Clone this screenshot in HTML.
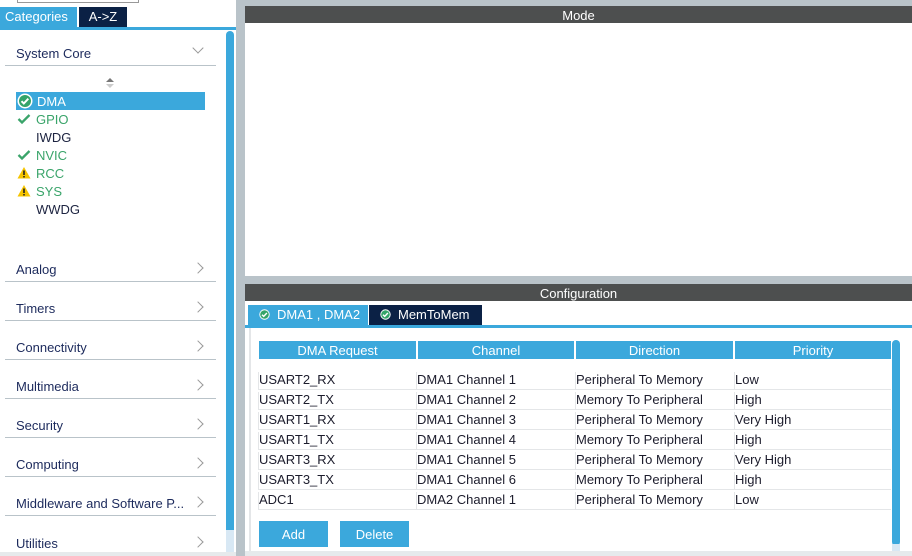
<!DOCTYPE html><html><head><style>
*{margin:0;padding:0;box-sizing:border-box}
body{width:912px;height:556px;background:#b9c3c9;font-family:"Liberation Sans",sans-serif;font-size:13px;position:relative;overflow:hidden;color:#1c2340}
.a{position:absolute}
.cat{position:absolute;left:16px;width:199px;height:23px;border-bottom:1px solid #b9c3c9;font-size:13px;color:#1c2a5c}
.cat span{position:absolute;left:0;bottom:4px}
.cat i{position:absolute;right:14px;bottom:9px;width:8px;height:8px;border-right:1.2px solid #999;border-top:1.2px solid #999;transform:rotate(45deg)}
.it{position:absolute;left:36px;font-size:13px}
.th{position:absolute;top:341px;height:18px;background:#3ba8dc;color:#fff;text-align:center;line-height:20px;font-size:13px}
.row{position:absolute;left:258px;width:633px;height:20px;border-bottom:1px solid #e4e6e8}
.row div{position:absolute;top:2px;font-size:13px;color:#1c1c2c;height:18px;border-left:1px solid #e4e6e8;padding-left:0}
.btn{position:absolute;top:521px;height:26px;background:#3ba8dc;color:#fff;text-align:center;line-height:27px}
</style></head><body>
<div class="a" style="left:0;top:0;width:236px;height:556px;background:#fff"></div>
<div class="a" style="left:17px;top:-2px;width:122px;height:5px;border:1px solid #999;background:#fff"></div>
<div class="a" style="left:0;top:7px;width:77px;height:20px;background:#3ba8dc;color:#fff;padding-left:5px;line-height:20px">Categories</div>
<div class="a" style="left:79px;top:7px;width:48px;height:20px;background:#0b2145;color:#fff;text-align:center;line-height:20px">A-&gt;Z</div>
<div class="a" style="left:0;top:27px;width:236px;height:3px;background:#3ba8dc"></div>
<div class="a" style="left:226px;top:31px;width:8px;height:503px;background:#3ba8dc;border-radius:4px"></div>
<div class="a" style="left:226px;top:530px;width:8px;height:22px;background:#d8e8f4"></div>
<div class="a" style="left:5px;top:65px;width:211px;height:1px;background:#b9c3c9"></div>
<div class="a" style="left:16px;top:46px;color:#1c2a5c">System Core</div>
<div class="a" style="left:194px;top:44px;width:8px;height:8px;border-right:1.2px solid #999;border-bottom:1.2px solid #999;transform:rotate(45deg)"></div>
<div class="a" style="left:106px;top:78px;width:0;height:0;border-left:4px solid transparent;border-right:4px solid transparent;border-bottom:4px solid #777"></div>
<div class="a" style="left:106px;top:84px;width:0;height:0;border-left:4px solid transparent;border-right:4px solid transparent;border-top:4px solid #ccc"></div>
<div class="a" style="left:16px;top:92px;width:189px;height:18px;background:#3ba8dc"></div>
<svg class="a" style="left:17px;top:93px" width="16" height="16"><circle cx="8" cy="8" r="7.5" fill="#fff"/><circle cx="8" cy="8" r="6" fill="#34a46a"/><path d="M4.5 8.2l2.3 2.3 4.5-4.8" stroke="#fff" stroke-width="2" fill="none"/></svg>
<div class="it" style="top:94px;color:#fff;left:37px">DMA</div>
<svg class="a" style="left:17px;top:113px" width="14" height="12"><path d="M1.5 6l3.5 3.5 7.5-7.5" stroke="#3aa46a" stroke-width="2.3" fill="none"/></svg>
<div class="it" style="top:112px;color:#3aa46a">GPIO</div>
<div class="it" style="top:130px">IWDG</div>
<svg class="a" style="left:17px;top:149px" width="14" height="12"><path d="M1.5 6l3.5 3.5 7.5-7.5" stroke="#3aa46a" stroke-width="2.3" fill="none"/></svg>
<div class="it" style="top:148px;color:#3aa46a">NVIC</div>
<svg class="a" style="left:17px;top:166px" width="14" height="13"><path d="M7 1L13.5 12.5H0.5Z" fill="#f5c400"/><rect x="6.2" y="4.5" width="1.6" height="4.5" fill="#222"/><rect x="6.2" y="10" width="1.6" height="1.5" fill="#222"/></svg>
<div class="it" style="top:166px;color:#3aa46a">RCC</div>
<svg class="a" style="left:17px;top:184px" width="14" height="13"><path d="M7 1L13.5 12.5H0.5Z" fill="#f5c400"/><rect x="6.2" y="4.5" width="1.6" height="4.5" fill="#222"/><rect x="6.2" y="10" width="1.6" height="1.5" fill="#222"/></svg>
<div class="it" style="top:184px;color:#3aa46a">SYS</div>
<div class="it" style="top:202px">WWDG</div>
<div class="cat" style="top:259px;left:5px;width:211px"><span style="left:11px">Analog</span><i></i></div>
<div class="cat" style="top:298px;left:5px;width:211px"><span style="left:11px">Timers</span><i></i></div>
<div class="cat" style="top:337px;left:5px;width:211px"><span style="left:11px">Connectivity</span><i></i></div>
<div class="cat" style="top:376px;left:5px;width:211px"><span style="left:11px">Multimedia</span><i></i></div>
<div class="cat" style="top:415px;left:5px;width:211px"><span style="left:11px">Security</span><i></i></div>
<div class="cat" style="top:454px;left:5px;width:211px"><span style="left:11px">Computing</span><i></i></div>
<div class="cat" style="top:493px;left:5px;width:211px"><span style="left:11px">Middleware and Software P...</span><i></i></div>
<div class="cat" style="top:532px;left:5px;width:211px;border:none"><span style="left:11px">Utilities</span><i></i></div>
<div class="a" style="left:0;top:552px;width:236px;height:4px;background:#e6eaec"></div>

<div class="a" style="left:245px;top:6px;width:667px;height:17px;background:#4d4f4f;color:#fff;text-align:center;line-height:19px;font-size:13px">Mode</div>
<div class="a" style="left:245px;top:23px;width:667px;height:253px;background:#fff"></div>
<div class="a" style="left:245px;top:284px;width:667px;height:17px;background:#4d4f4f;color:#fff;text-align:center;line-height:19px;font-size:13px">Configuration</div>
<div class="a" style="left:245px;top:301px;width:667px;height:250px;background:#fff"></div>
<div class="a" style="left:248px;top:305px;width:120px;height:21px;background:#3ba8dc;color:#fff;line-height:20px;padding-left:29px">DMA1 , DMA2</div>
<div class="a" style="left:369px;top:305px;width:113px;height:20px;background:#0b2145;color:#fff;line-height:20px;padding-left:29px">MemToMem</div>
<svg class="a" style="left:259px;top:309px" width="11" height="11"><circle cx="5.5" cy="5.5" r="5.2" fill="#fff"/><circle cx="5.5" cy="5.5" r="4.3" fill="#34a46a"/><path d="M3 5.7l1.7 1.7 3.2-3.4" stroke="#fff" stroke-width="1.4" fill="none"/></svg>
<svg class="a" style="left:380px;top:309px" width="11" height="11"><circle cx="5.5" cy="5.5" r="5.2" fill="#fff"/><circle cx="5.5" cy="5.5" r="4.3" fill="#34a46a"/><path d="M3 5.7l1.7 1.7 3.2-3.4" stroke="#fff" stroke-width="1.4" fill="none"/></svg>
<div class="a" style="left:245px;top:325px;width:667px;height:3px;background:#3ba8dc"></div>
<div class="a" style="left:249px;top:328px;width:2px;height:223px;background:#e4e6e8"></div>
<div class="th" style="left:259px;width:157px">DMA Request</div>
<div class="th" style="left:418px;width:156px">Channel</div>
<div class="th" style="left:576px;width:157px">Direction</div>
<div class="th" style="left:735px;width:156px">Priority</div>
<div class="row" style="top:370px"><div style="left:0">USART2_RX</div><div style="left:158px">DMA1 Channel 1</div><div style="left:317px">Peripheral To Memory</div><div style="left:476px">Low</div></div>
<div class="row" style="top:390px"><div style="left:0">USART2_TX</div><div style="left:158px">DMA1 Channel 2</div><div style="left:317px">Memory To Peripheral</div><div style="left:476px">High</div></div>
<div class="row" style="top:410px"><div style="left:0">USART1_RX</div><div style="left:158px">DMA1 Channel 3</div><div style="left:317px">Peripheral To Memory</div><div style="left:476px">Very High</div></div>
<div class="row" style="top:430px"><div style="left:0">USART1_TX</div><div style="left:158px">DMA1 Channel 4</div><div style="left:317px">Memory To Peripheral</div><div style="left:476px">High</div></div>
<div class="row" style="top:450px"><div style="left:0">USART3_RX</div><div style="left:158px">DMA1 Channel 5</div><div style="left:317px">Peripheral To Memory</div><div style="left:476px">Very High</div></div>
<div class="row" style="top:470px"><div style="left:0">USART3_TX</div><div style="left:158px">DMA1 Channel 6</div><div style="left:317px">Memory To Peripheral</div><div style="left:476px">High</div></div>
<div class="row" style="top:490px"><div style="left:0">ADC1</div><div style="left:158px">DMA2 Channel 1</div><div style="left:317px">Peripheral To Memory</div><div style="left:476px">Low</div></div>
<div class="a" style="left:892px;top:340px;width:8px;height:206px;background:#3ba8dc;border-radius:4px"></div>
<div class="a" style="left:892px;top:544px;width:8px;height:7px;background:#d8e8f4"></div>
<div class="btn" style="left:259px;width:69px">Add</div>
<div class="btn" style="left:340px;width:69px">Delete</div>
<div class="a" style="left:245px;top:551px;width:667px;height:5px;background:#e6eaec"></div>
</body></html>
